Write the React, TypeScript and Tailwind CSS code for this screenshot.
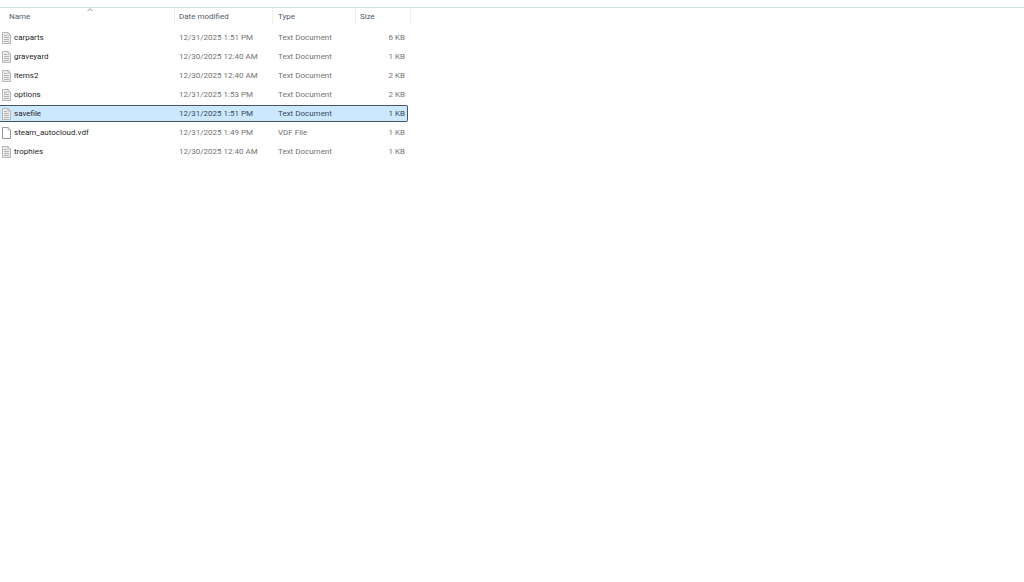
import React, { useState } from "react";
import clsx from "clsx";

interface FileEntry {
  name: string;
  modified: string;
  type: string;
  size: string;
}

const files: FileEntry[] = [
  { name: "carparts", modified: "12/31/2025 1:51 PM", type: "Text Document", size: "6 KB" },
  { name: "graveyard", modified: "12/30/2025 12:40 AM", type: "Text Document", size: "1 KB" },
  { name: "items2", modified: "12/30/2025 12:40 AM", type: "Text Document", size: "2 KB" },
  { name: "options", modified: "12/31/2025 1:53 PM", type: "Text Document", size: "2 KB" },
  { name: "savefile", modified: "12/31/2025 1:51 PM", type: "Text Document", size: "1 KB" },
  { name: "steam_autocloud.vdf", modified: "12/31/2025 1:49 PM", type: "VDF File", size: "1 KB" },
  { name: "trophies", modified: "12/30/2025 12:40 AM", type: "Text Document", size: "1 KB" },
];

const columns = [
  { label: "Name", width: "w-[175px]", padding: "pl-[9px]" },
  { label: "Date modified", width: "w-[98px]", padding: "pl-1" },
  { label: "Type", width: "w-[83px]", padding: "pl-[5px]" },
  { label: "Size", width: "w-[52px]", padding: "pl-1" },
];

const FileIcon: React.FC<{ lined: boolean }> = ({ lined }) => (
  <svg viewBox="0 0 9 12" className="h-3 w-[9px] shrink-0" aria-hidden="true">
    <path
      d="M.5.5h5.6l2.4 2.4v8.6h-8z"
      fill={lined ? "#ececec" : "#ffffff"}
      stroke={lined ? "#b0b0b0" : "#8c8c8c"}
      strokeWidth=".9"
    />
    <path d="M6 .6v2.5h2.4" fill="none" stroke="#a8a8a8" strokeWidth=".6" />
    {lined && (
      <path
        d="M2 3.5h3M2 5.5h5M2 7.5h5M2 9.5h5"
        stroke="#a6a6a6"
        strokeWidth=".8"
      />
    )}
  </svg>
);

const App: React.FC = () => {
  const [selected, setSelected] = useState("savefile");

  return (
    <main className="min-h-screen bg-white font-[Roboto,'Open_Sans',sans-serif] text-[8px] leading-[15px]">
      <div className="h-2 border-b border-[#d3e2df]" />
      <table className="-mt-0.5 table-fixed border-separate border-spacing-x-0 border-spacing-y-0.5 w-[411px]">
        <thead>
          <tr className="h-[19px]">
            {columns.map((col) => (
              <th
                key={col.label}
                className={clsx("p-0 align-top font-normal", col.width)}
                aria-sort={col.label === "Name" ? "ascending" : undefined}
              >
                <button
                  className={clsx(
                    "relative flex h-4 w-full items-end text-[#505b6e]",
                    col.label !== "Size" && "border-r border-[#efefef]",
                    col.padding
                  )}
                >
                  {col.label}
                  {col.label === "Name" && (
                    <svg
                      viewBox="0 0 6 4"
                      className="absolute top-0 left-1/2 h-1 w-1.5"
                      aria-hidden="true"
                    >
                      <path d="M.5 3.2 3 .7l2.5 2.5" fill="none" stroke="#777777" strokeWidth=".8" />
                    </svg>
                  )}
                </button>
              </th>
            ))}
            <td className="p-0 align-top">
              <div className="h-4 border-r border-[#efefef]" />
            </td>
          </tr>
        </thead>
        <tbody>
          {files.map((file) => {
            const active = file.name === selected;
            const cell = clsx(
              "border-y p-0 whitespace-nowrap",
              active
                ? "border-[#46545f] bg-[#cce8ff] text-[#34495c]"
                : "border-transparent text-[#737373]"
            );

            return (
              <tr
                key={file.name}
                className="h-[17px] cursor-default"
                aria-selected={active}
                onClick={() => setSelected(file.name)}
              >
                <td className={cell}>
                  <div className="flex items-center gap-[3px] pl-0.5 text-[#1f1f1f]">
                    <FileIcon lined={file.type === "Text Document"} />
                    {file.name}
                  </div>
                </td>
                <td className={clsx(cell, "pl-1")}>{file.modified}</td>
                <td className={clsx(cell, "pl-[5px]")}>{file.type}</td>
                <td className={clsx(cell, "rounded-r-xs border-r pr-0.5 text-right")}>
                  {file.size}
                </td>
              </tr>
            );
          })}
        </tbody>
      </table>
    </main>
  );
};

export default App;
